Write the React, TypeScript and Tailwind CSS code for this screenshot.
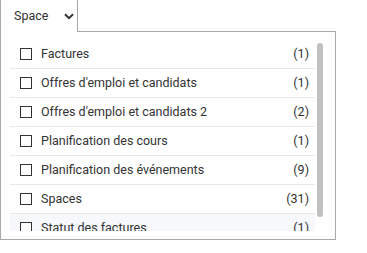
const items = [
  { label: "Factures", count: 1 },
  { label: "Offres d'emploi et candidats", count: 1 },
  { label: "Offres d'emploi et candidats 2", count: 2 },
  { label: "Planification des cours", count: 1 },
  { label: "Planification des événements", count: 9 },
  { label: "Spaces", count: 31 },
  { label: "Statut des factures", count: 1 },
];

const App = () => {
  return (
    <div className="w-[367px] h-[253px] bg-white text-[#333] font-['Roboto',sans-serif] text-[12.5px]">
      {/* Tab */}
      <div className="relative z-10 flex items-center w-[78px] h-[32px] pl-[13px] gap-[16px] bg-white border-l border-r border-[#a8a8a8]">
        <span>Space</span>
        <svg width="10" height="7" viewBox="0 0 10 7" fill="none">
          <path d="M1 1.2l4 4 4-4" stroke="#333" strokeWidth="2" />
        </svg>
      </div>

      {/* Panel */}
      <div className="relative -mt-px w-[336px] h-[209px] border border-[#a8a8a8] pt-[8px] pb-[8px] pl-[9px] pr-[20px]">
        <div className="h-[191px] overflow-hidden">
          {items.map((item, i) => (
            <div
              key={item.label}
              className={`flex items-center h-[29px] border-b border-[#e8e8e8] pl-[10px] pr-[6px] ${i === items.length - 1 ? "bg-[#f6f8fc]" : ""}`}
            >
              <span className="w-[12px] h-[12px] border border-[#333] bg-white shrink-0" />
              <span className="ml-[9px] flex-1 whitespace-nowrap">{item.label}</span>
              <span>({item.count})</span>
            </div>
          ))}
        </div>
        {/* scrollbar */}
        <div className="absolute left-[316px] top-[11px] w-[6px] h-[174px] rounded-full bg-[#c1c1c1]" />
      </div>
    </div>
  );
};

export default App;
